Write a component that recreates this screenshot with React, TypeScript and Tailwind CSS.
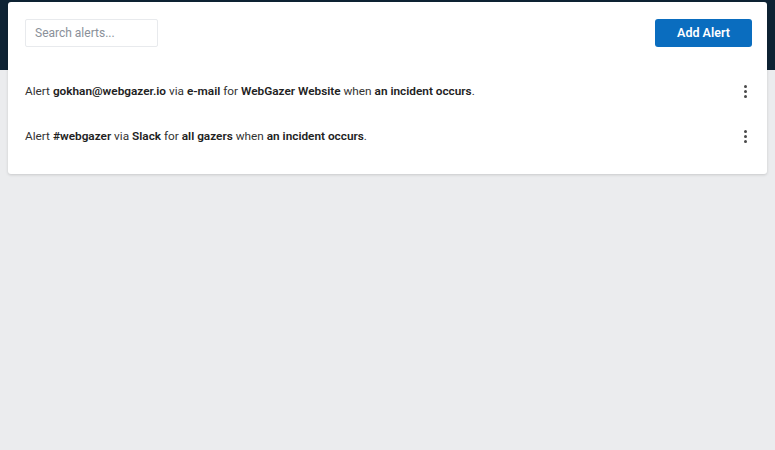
import React from "react";

function Kebab() {
  return (
    <button className="flex h-5 w-4 flex-col items-center justify-center gap-[2px]">
      <span className="h-[3px] w-[3px] rounded-full bg-[#4a4a4a]" />
      <span className="h-[3px] w-[3px] rounded-full bg-[#4a4a4a]" />
      <span className="h-[3px] w-[3px] rounded-full bg-[#4a4a4a]" />
    </button>
  );
}

export default function App() {
  const b = "font-semibold text-[#222]";
  return (
    <div
      className="relative min-h-[450px] w-full bg-[#ebecee]"
      style={{ fontFamily: "Roboto, 'Noto Sans', sans-serif" }}
    >
      <div className="absolute left-0 right-0 top-0 h-[70px] bg-[#0e2334]" />
      <div className="relative px-2 pt-[2px]">
        <div className="rounded-[3px] bg-white shadow-[0_1px_3px_rgba(0,0,0,0.15)]">
          <div className="flex items-center justify-between pl-[17px] pr-[15px] pt-[17px]">
            <input
              placeholder="Search alerts..."
              className="h-[28px] w-[133px] rounded-[2px] border border-[#e8eaed] px-[9px] text-[12px] text-[#333] placeholder:text-[#8a9099] outline-none"
            />
            <button className="h-[28px] w-[97px] rounded-[3px] bg-[#0a6dbf] text-[12.5px] font-semibold text-white">
              Add Alert
            </button>
          </div>
          <div className="pb-[15px] pt-[22px]">
            <div className="flex h-[45px] items-center justify-between pl-[17px] pr-[14px] text-[11.8px] text-[#333]">
              <p>
                Alert <span className={b}>gokhan@webgazer.io</span> via{" "}
                <span className={b}>e-mail</span> for{" "}
                <span className={b}>WebGazer Website</span> when{" "}
                <span className={b}>an incident occurs</span>.
              </p>
              <Kebab />
            </div>
            <div className="flex h-[45px] items-center justify-between pl-[17px] pr-[14px] text-[11.8px] text-[#333]">
              <p>
                Alert <span className={b}>#webgazer</span> via{" "}
                <span className={b}>Slack</span> for{" "}
                <span className={b}>all gazers</span> when{" "}
                <span className={b}>an incident occurs</span>.
              </p>
              <Kebab />
            </div>
          </div>
        </div>
      </div>
    </div>
  );
}
